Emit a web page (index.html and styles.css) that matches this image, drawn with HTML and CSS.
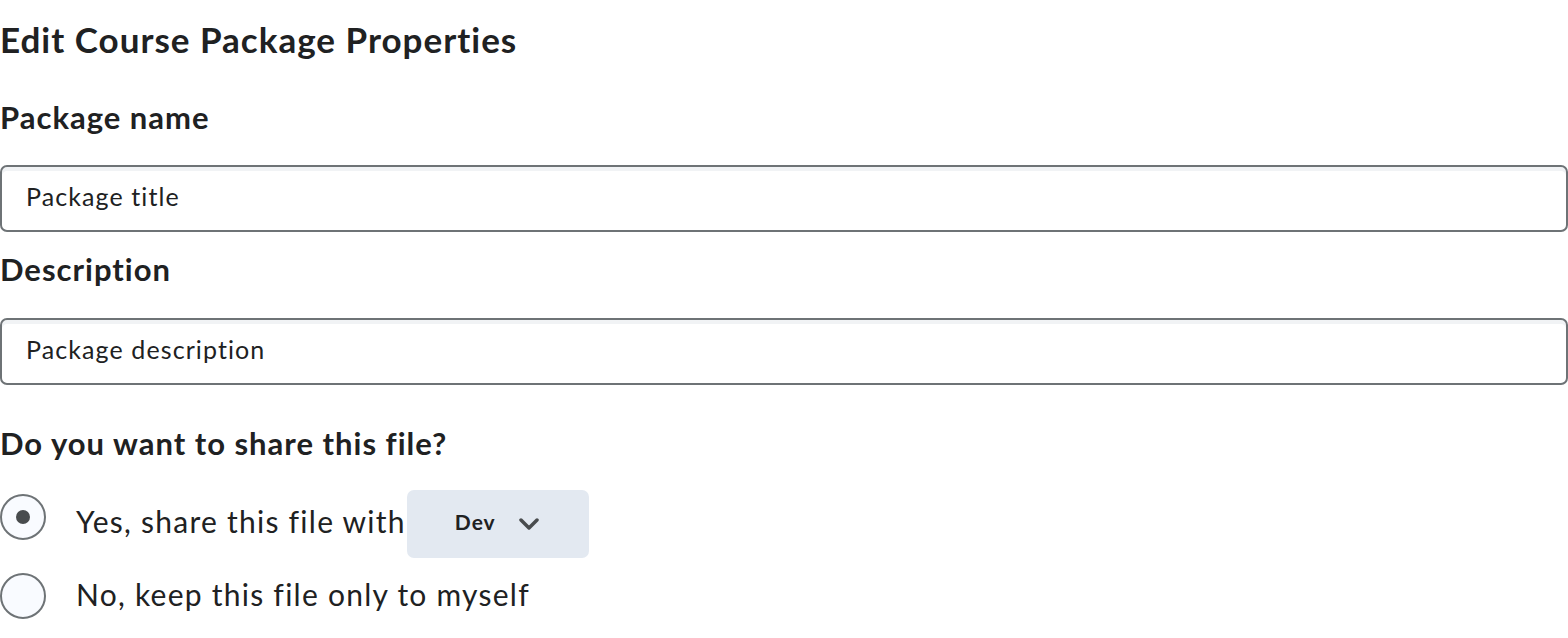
FILE: index.html
```html
<!DOCTYPE html>
<html>
<head>
<meta charset="utf-8">
<link rel="stylesheet" href="styles.css">
</head>
<body>
<div class="page">
  <h1 class="title">Edit Course Package Properties</h1>
  <label class="label" for="pname">Package name</label>
  <input id="pname" class="field" type="text" value="Package title">
  <label class="label label-desc" for="pdesc">Description</label>
  <input id="pdesc" class="field field2" type="text" value="Package description">
  <div class="question">Do you want to share this file?</div>
  <div class="radio-row row1">
    <span class="radio checked"><span class="dot"></span></span>
    <span class="radio-text">Yes, share this file with</span>
    <button class="dropdown"><span>Dev</span>
      <svg width="22" height="12" viewBox="0 0 22 12"><path d="M3 2 L11 10 L19 2" fill="none" stroke="#494c4e" stroke-width="3.5" stroke-linecap="round" stroke-linejoin="round"/></svg>
    </button>
  </div>
  <div class="radio-row row2">
    <span class="radio"></span>
    <span class="radio-text">No, keep this file only to myself</span>
  </div>
</div>
</body>
</html>
```
FILE: styles.css
```css
html, body { margin: 0; padding: 0; background: #fff; }
body { font-family: Lato, "Noto Sans", sans-serif; color: #202122; }
.page { display: flex; flex-direction: column; align-items: flex-start; }
.title { font-size: 35px; letter-spacing: 1px; font-weight: 700; margin: 18px 0 0 0; line-height: 42px; }
.label { font-size: 31px; letter-spacing: 1px; font-weight: 700; line-height: 36px; margin-top: 39px; display: block; }
.label-desc { margin-top: 19px; }
.field {
  box-sizing: border-box; width: 1568px; height: 67px; margin-top: 30px;
  border: 2px solid #6e7376; border-radius: 7px;
  box-shadow: inset 0 4px 0 0 #f1f3f5;
  padding: 0 0 6px 24px; font-family: Lato, sans-serif; font-size: 25px;
  color: #202122; letter-spacing: 1.1px; background: #fff; outline: none;
}
.field2 { margin-top: 31px; }
.question { font-size: 31px; letter-spacing: 1px; font-weight: 700; line-height: 36px; margin-top: 40px; }
.radio-row { display: flex; align-items: center; }
.row1 { margin-top: 29px; height: 68px; }
.row2 { margin-top: 15px; height: 46px; }
.radio {
  box-sizing: border-box; width: 46px; height: 46px; border-radius: 50%;
  border: 2px solid #6e7376; background: #f9fbff;
  display: flex; align-items: center; justify-content: center; flex: none;
}
.row1 .radio { align-self: flex-start; margin-top: 4px; }
.dot { width: 14px; height: 14px; border-radius: 50%; background: #494c4e; }
.radio-text { font-size: 30px; letter-spacing: 1.25px; margin-left: 30px; line-height: 40px; }
.row1 .radio-text { margin-bottom: 6px; }
.row2 .radio-text { margin-bottom: 4px; }
.dropdown {
  border: none; background: #e3e9f1; border-radius: 7px; width: 182px; height: 68px;
  display: flex; align-items: center; justify-content: flex-start; gap: 22px;
  font-family: Lato, sans-serif; font-weight: 700; font-size: 21px; letter-spacing: 1px; color: #202122;
  padding: 0 0 6px 48px; margin-left: 1px; flex: none;
}
.dropdown svg { margin-top: 6px; }
```
